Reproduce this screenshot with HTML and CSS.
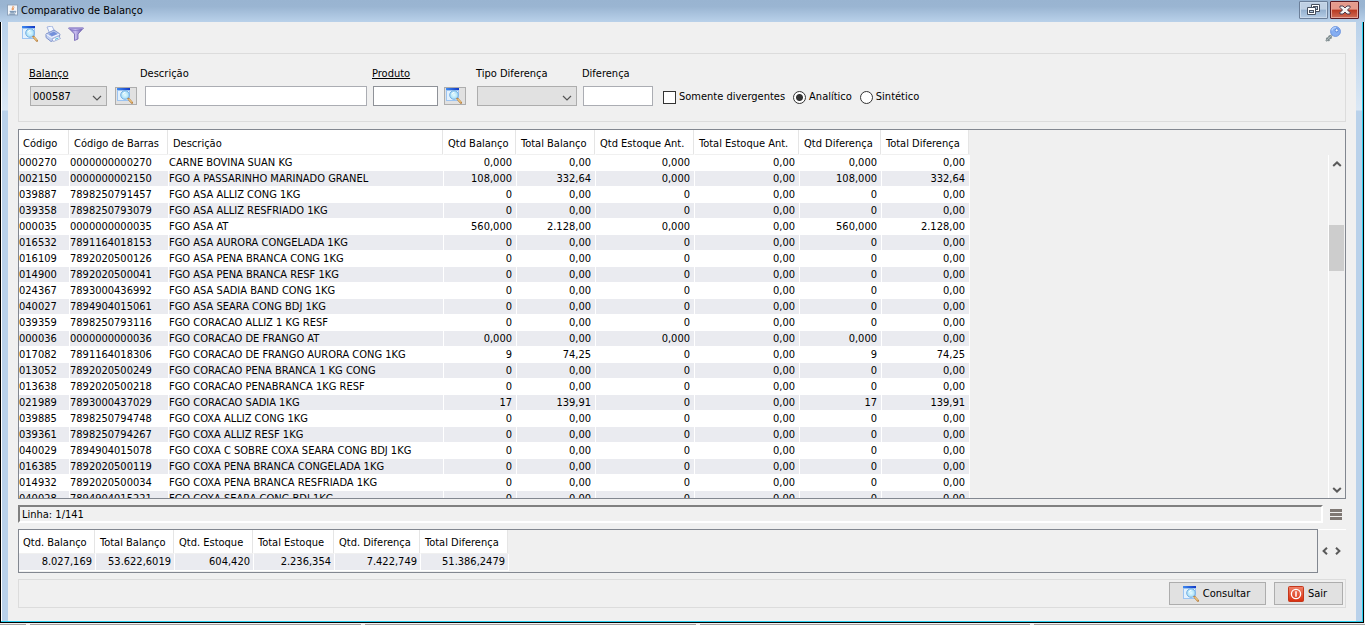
FILE: index.html
```html
<!DOCTYPE html>
<html lang="pt-BR">
<head>
    <meta charset="UTF-8">
    <meta name="viewport" content="width=device-width, initial-scale=1.0">
    <title>Comparativo de Balanço</title>
    <link rel="stylesheet" href="styles.css">
</head>
<body>
    <!-- shared icons -->
    <svg class="sprite" aria-hidden="true">
        <defs>
            <linearGradient id="bar" x1="0" x2="1"><stop offset="0" stop-color="#3f8af0"/><stop offset="1" stop-color="#1238c4"/></linearGradient>
            <linearGradient id="funnelFill" x1="0" x2="1"><stop offset="0" stop-color="#6f62b4"/><stop offset=".45" stop-color="#c9bdf0"/><stop offset="1" stop-color="#5d4fa3"/></linearGradient>
            <linearGradient id="powerFill" x1="0" y1="0" x2="0" y2="1"><stop offset="0" stop-color="#f0836a"/><stop offset="1" stop-color="#d92d0c"/></linearGradient>
            <radialGradient id="lens"><stop offset="0" stop-color="#e6fbff"/><stop offset="1" stop-color="#9fdcf7"/></radialGradient>
        </defs>
        <symbol id="search" viewBox="0 0 16 16">
            <rect x="0" y="0" width="13" height="13" fill="#9cc4f2"/>
            <rect x="1" y="3" width="11" height="9" fill="#e3f1fd"/>
            <rect x="0" y="0" width="13" height="2" fill="url(#bar)"/>
            <circle cx="8" cy="7" r="4.3" fill="url(#lens)" stroke="#78aee2"/>
            <path d="M5.8 6.4A2.6 2.6 0 0 1 8.4 4.4" fill="none" stroke="#fff"/>
            <path d="M11.4 10.8L15 14.8" stroke="#b98343" stroke-width="2.2" stroke-linecap="round"/>
            <path d="M11.6 10.8L14.8 14.4" stroke="#f2c981" stroke-width="1.2"/>
        </symbol>
        <symbol id="chevron-down" viewBox="0 0 10 6">
            <path d="M1 1L5 5L9 1" fill="none" stroke="#555" stroke-width="1.2"/>
        </symbol>
    </svg>

    <div class="window">
        <header class="titlebar">
            <svg class="java" viewBox="0 0 12 12">
                <rect x=".5" y=".5" width="11" height="11" fill="#f3f6fa" stroke="#8ba0b8"/>
                <path d="M6.5 1.5C7.5 3 4.8 3.8 5.8 6.2M8 3.2C6.6 4 6.6 5 7 6" fill="none" stroke="#e5792c"/>
                <path d="M3 7.5H8.5M3.5 9H8M2.5 10.5H9M8.5 7.5C10 7 10 8.6 8.4 9" fill="none" stroke="#51749c" stroke-width=".9"/>
            </svg>
            <h1>Comparativo de Balanço</h1>
            <button class="restore" type="button" aria-label="Restaurar">
                <svg width="13" height="12" viewBox="0 0 13 12">
                    <path d="M4.5 .5H12.5V7.5H4.5Z" fill="#fff" stroke="#46505f"/>
                    <rect x="6.5" y="2.5" width="4" height="3" fill="#b8cde2" stroke="#46505f"/>
                    <path d="M.5 3.5H8.5V10.5H.5Z" fill="#fff" stroke="#46505f"/>
                    <rect x="2.5" y="6.5" width="4" height="2" fill="#b8cde2" stroke="#46505f"/>
                </svg>
            </button>
            <button class="close" type="button" aria-label="Fechar">
                <svg width="12" height="10" viewBox="0 0 12 10">
                    <path d="M1 1H4L6 3L8 1H11V2.5L8.5 5L11 7.5V9H8L6 7L4 9H1V7.5L3.5 5L1 2.5Z" fill="#f5f5f5" stroke="#4d3c4c"/>
                </svg>
            </button>
        </header>

        <div class="frame">
            <main class="content">
                <nav class="toolbar">
                    <button type="button" aria-label="Consultar"><svg><use href="#search"/></svg></button>
                    <button type="button" aria-label="Imprimir">
                        <svg viewBox="0 0 16 16">
                            <path d="M2 1L7 0L10 6L5 8Z" fill="#f4f8ff" stroke="#a3b4e0"/>
                            <path d="M1 8L9 4L15 8L14 12L6 15.5L1 11.5Z" fill="#c0cef0" stroke="#7f93cb"/>
                            <path d="M1.5 8.5L6.5 11.5L14.5 8" fill="none" stroke="#f6f9ff"/>
                            <path d="M3.5 8L9 5.5L12.5 8L7 10.2Z" fill="#7390da"/>
                            <path d="M7 13L13.5 10L15.5 12.5L8.5 15.5Z" fill="#fff" stroke="#8297cd" stroke-width=".7"/>
                            <path d="M10 13.4L13.5 11.9" stroke="#43b4dc"/>
                        </svg>
                    </button>
                    <button type="button" aria-label="Filtrar">
                        <svg viewBox="0 0 16 16">
                            <path d="M.5 2H15.5L10 8V13L6.5 14.5V8Z" fill="url(#funnelFill)" stroke="#6c5eae" stroke-width=".8"/>
                            <path d="M1 2.3H15" stroke="#9d91d3" stroke-width="1.6"/>
                            <path d="M3 4.5H12" stroke="#8a7cc8" stroke-width=".8"/>
                        </svg>
                    </button>
                    <button class="key" type="button" aria-label="Permissões">
                        <svg viewBox="0 0 16 16">
                            <path d="M7 9L1 15M1.5 11.8L4.5 14.8M3.7 9.7L6.5 12.5" fill="none" stroke="#7c8a8d" stroke-width="2"/>
                            <path d="M7 9L1.5 14.5" stroke="#b8c2c3" stroke-width=".8"/>
                            <circle cx="10.5" cy="5.5" r="4.9" fill="#85aef2" stroke="#6c94df"/>
                            <path d="M6.8 4.5A4 4 0 0 1 11 1.7" fill="none" stroke="#b9d3fb" stroke-width="1.2"/>
                            <circle cx="11.7" cy="4.3" r="1.6" fill="#edf4ff" stroke="#5a86d8"/>
                        </svg>
                    </button>
                </nav>

                <form class="filters">
                    <div class="field balanco">
                        <label class="link" for="balanco">Balanço</label>
                        <div class="control">
                            <span class="select">
                                <select id="balanco"><option>000587</option></select>
                                <svg><use href="#chevron-down"/></svg>
                            </span>
                            <button class="lookup" type="button" aria-label="Buscar balanço"><svg><use href="#search"/></svg></button>
                        </div>
                    </div>
                    <div class="field descricao">
                        <label for="descricao">Descrição</label>
                        <div class="control"><input id="descricao" type="text"></div>
                    </div>
                    <div class="field produto">
                        <label class="link" for="produto">Produto</label>
                        <div class="control">
                            <input id="produto" type="text">
                            <button class="lookup" type="button" aria-label="Buscar produto"><svg><use href="#search"/></svg></button>
                        </div>
                    </div>
                    <div class="field tipo">
                        <label for="tipo">Tipo Diferença</label>
                        <div class="control">
                            <span class="select">
                                <select id="tipo"><option></option></select>
                                <svg><use href="#chevron-down"/></svg>
                            </span>
                        </div>
                    </div>
                    <div class="field diferenca">
                        <label for="diferenca">Diferença</label>
                        <div class="control"><input id="diferenca" type="text"></div>
                    </div>
                    <div class="options">
                        <label><input type="checkbox"> Somente divergentes</label>
                        <label><input type="radio" name="modo" checked> Analítico</label>
                        <label><input type="radio" name="modo"> Sintético</label>
                    </div>
                </form>

                <section class="grid-box">
                    <div class="grid-view">
                        <table class="grid">
                            <colgroup>
                                <col class="w51"><col class="w99"><col class="w275"><col class="w73"><col class="w79"><col class="w99"><col class="w105"><col class="w82"><col class="w88">
                            </colgroup>
                            <thead>
                                <tr>
                                    <th>Código</th>
                                    <th>Código de Barras</th>
                                    <th>Descrição</th>
                                    <th>Qtd Balanço</th>
                                    <th>Total Balanço</th>
                                    <th>Qtd Estoque Ant.</th>
                                    <th>Total Estoque Ant.</th>
                                    <th>Qtd Diferença</th>
                                    <th>Total Diferença</th>
                                </tr>
                            </thead>
                            <tbody id="rows"></tbody>
                        </table>
                    </div>
                    <div class="scrollbar">
                        <svg viewBox="0 0 10 6"><path d="M1.2 5L5 1.4L8.8 5" fill="none" stroke="#5a5a5a" stroke-width="2"/></svg>
                        <div class="thumb"></div>
                        <svg viewBox="0 0 10 6"><path d="M1.2 1L5 4.6L8.8 1" fill="none" stroke="#5a5a5a" stroke-width="2"/></svg>
                    </div>
                </section>

                <div class="status">
                    <p>Linha: 1/141</p>
                    <button class="menu" type="button" aria-label="Menu"><i></i><i></i><i></i></button>
                </div>

                <section class="summary">
                    <div class="summary-view">
                        <table class="grid totals">
                            <colgroup>
                                <col class="w77"><col class="w79"><col class="w79"><col class="w81"><col class="w86"><col class="w88">
                            </colgroup>
                            <thead>
                                <tr>
                                    <th>Qtd. Balanço</th>
                                    <th>Total Balanço</th>
                                    <th>Qtd. Estoque</th>
                                    <th>Total Estoque</th>
                                    <th>Qtd. Diferença</th>
                                    <th>Total Diferença</th>
                                </tr>
                            </thead>
                            <tbody>
                                <tr>
                                    <td class="num">8.027,169</td>
                                    <td class="num">53.622,6019</td>
                                    <td class="num">604,420</td>
                                    <td class="num">2.236,354</td>
                                    <td class="num">7.422,749</td>
                                    <td class="num">51.386,2479</td>
                                </tr>
                            </tbody>
                        </table>
                    </div>
                    <div class="pager">
                        <button type="button" aria-label="Anterior"><svg viewBox="0 0 6 8"><path d="M5 .8L1.6 4L5 7.2" fill="none" stroke="#5a5a5a" stroke-width="2"/></svg></button>
                        <button type="button" aria-label="Próximo"><svg viewBox="0 0 6 8"><path d="M1 .8L4.4 4L1 7.2" fill="none" stroke="#5a5a5a" stroke-width="2"/></svg></button>
                    </div>
                </section>

                <footer class="actions">
                    <button class="consultar" type="button"><svg><use href="#search"/></svg>Consultar</button>
                    <button class="sair" type="button">
                        <svg viewBox="0 0 16 16">
                            <rect x=".5" y=".5" width="15" height="15" rx="1" fill="url(#powerFill)" stroke="#c4371b"/>
                            <circle cx="8" cy="8" r="4.6" fill="none" stroke="#fff" stroke-width="1.3"/>
                            <path d="M8 5.3V10.7" stroke="#fff" stroke-width="1.5"/>
                        </svg>Sair
                    </button>
                </footer>
            </main>
        </div>
        <div class="taskline"><span></span><span></span><span></span><span></span><span></span></div>
    </div>

    <script src="script.js"></script>
</body>
</html>
```
FILE: styles.css
```css
*{
    box-sizing: border-box;
}
body{
    margin: 0;
    background: #f0f0f0;
    color: #000;
    font-family: "DejaVu Sans Condensed", "DejaVu Sans", sans-serif;
    font-size: 11px;
    line-height: 14px;
}
button, input, select{
    font: inherit;
    color: inherit;
    margin: 0;
    border-radius: 0;
}
button{
    display: flex;
    align-items: center;
    justify-content: center;
    padding: 0;
    border: none;
    background: none;
}
svg{
    display: block;
    flex: none;
    width: 16px;
    height: 16px;
}
.sprite{
    position: absolute;
    width: 0;
    height: 0;
}
.window{
    display: flex;
    flex-direction: column;
    height: 100vh;
    overflow: hidden;
}

/* title bar */
.titlebar{
    display: flex;
    align-items: flex-start;
    flex: none;
    height: 22px;
    padding: 1px 6px 0 7px;
    background: linear-gradient(#99b4d1, #9ab5d2 30%, #b9d1ea);
}
.titlebar .java{
    width: 11px;
    height: 12px;
    margin-top: 3px;
}
.titlebar h1{
    flex: 1;
    margin: 3px 0 0 3px;
    font-size: 11px;
    font-weight: normal;
}
.titlebar button{
    width: 29px;
    height: 18px;
    border: 1px solid #6b7f99;
    border-radius: 1px;
    box-shadow: inset 0 0 0 1px #c9d9ea;
    background: linear-gradient(#bfd0e3 45%, #94b0ce 50%, #b5cde6);
}
.titlebar button svg{
    width: auto;
    height: auto;
}
.titlebar .close{
    margin-left: 2px;
    border-color: #5a1a22;
    box-shadow: inset 0 0 0 1px #e5a296;
    background: linear-gradient(#e49a8c 45%, #b93820 50%, #cf6d57);
}

/* window frame */
.frame{
    display: flex;
    flex: 1;
    min-height: 0;
    margin-right: 1px;
    padding: 0 6px;
    border: 1px solid #000;
    border-top: none;
    box-shadow: inset -1px -1px 0 #2ad0f0, inset 1px 0 0 #fff;
    background: linear-gradient(#b9d1ea, #dbe8f5 88px, #b9d1ea 89px);
}
.content{
    display: flex;
    flex-direction: column;
    flex: 1;
    min-width: 0;
    margin: 0 1px 1px;
    padding: 0 10px 13px;
    background: #f0f0f0;
}
.toolbar{
    display: flex;
    gap: 7px;
    flex: none;
    height: 31px;
    padding: 4px 5px 0 4px;
}
.toolbar button{
    width: 16px;
    height: 16px;
}
.toolbar .key{
    margin-left: auto;
}

/* filters */
.filters{
    display: flex;
    flex: none;
    height: 69px;
    padding: 13px 10px 0;
    border: 1px solid #dcdcdc;
}
.field{
    display: flex;
    flex-direction: column;
    gap: 5px;
}
.link{
    text-decoration: underline;
}
.control{
    display: flex;
    align-items: center;
    gap: 8px;
    height: 20px;
    padding-left: 1px;
}
.balanco{
    width: 111px;
}
.descricao{
    width: 232px;
}
.descricao .control{
    padding-left: 5px;
}
.produto{
    width: 104px;
}
.produto .control{
    gap: 6px;
}
.tipo{
    width: 106px;
}
.diferenca{
    width: 81px;
}
input[type="text"]{
    width: 70px;
    height: 20px;
    padding: 0 3px;
    border: 1px solid #abadb3;
    background: #fff;
}
#descricao{
    width: 222px;
}
#produto{
    width: 65px;
    border-color: #8f9298;
}
.select{
    position: relative;
}
.select select{
    display: block;
    appearance: none;
    width: 77px;
    height: 20px;
    padding: 1px 2px 0;
    border: 1px solid #adadad;
    background: #e1e1e1;
}
.tipo select{
    width: 100px;
}
.select svg{
    position: absolute;
    right: 5px;
    top: 9px;
    width: 10px;
    height: 6px;
    pointer-events: none;
}
.lookup{
    width: 22px;
    height: 18px;
    padding-right: 2px;
    border: 1px solid #adadad;
    background: #e1e1e1;
}
.options{
    display: flex;
    align-items: center;
    align-self: flex-start;
    gap: 8px;
    height: 14px;
    margin-top: 23px;
}
.options label{
    display: flex;
    align-items: center;
    gap: 3px;
    white-space: nowrap;
}
.options input{
    appearance: none;
    width: 13px;
    height: 13px;
    border: 1px solid #333;
    background: #fff;
}
.options input[type="radio"]{
    border-radius: 50%;
}
.options input[type="radio"]:checked{
    background: radial-gradient(circle, #333 3px, #fff 4px);
}

/* tables */
.grid-box{
    display: flex;
    flex: 1;
    min-height: 0;
    margin-top: 7px;
    border: 1px solid #828790;
}
.grid-view{
    flex: 1;
    min-width: 0;
    overflow: hidden;
}
.grid{
    table-layout: fixed;
    width: 951px;
    border-spacing: 0;
    background: #fff;
}
.totals{
    width: 490px;
}
.grid th{
    height: 25px;
    padding: 3px 0 0 4px;
    border-right: 1px solid #fff;
    border-bottom: 1px solid #f0f0f0;
    box-shadow: inset -1px 0 0 #e5e5e5;
    font-weight: normal;
    text-align: left;
    white-space: nowrap;
}
.grid th:last-child{
    border-right-color: #f0f0f0;
}
.grid td{
    height: 16px;
    padding: 0;
    border-right: 1px solid #fff;
    border-bottom: 1px solid #fff;
    white-space: nowrap;
    overflow: hidden;
}
.grid .num{
    padding-right: 4px;
    text-align: right;
}
.grid tbody tr:nth-child(even), .totals tbody tr{
    background: #eaebf0;
}
.grid.totals th{
    height: 24px;
}
.grid.totals td{
    height: 17px;
}
.grid.totals .num{
    padding-right: 3px;
}
.w51{ width: 51px; }
.w73{ width: 73px; }
.w77{ width: 77px; }
.w79{ width: 79px; }
.w81{ width: 81px; }
.w82{ width: 82px; }
.w86{ width: 86px; }
.w88{ width: 88px; }
.w99{ width: 99px; }
.w105{ width: 105px; }
.w275{ width: 275px; }

.scrollbar{
    display: flex;
    flex-direction: column;
    align-items: center;
    width: 17px;
    margin-top: 25px;
    padding: 6px 1px 5px 0;
    border-left: 1px solid #fff;
}
.scrollbar svg{
    width: 10px;
    height: 6px;
}
.thumb{
    width: 15px;
    height: 46px;
    margin: 58px 0 auto;
    background: #cdcdcd;
}

/* status line */
.status{
    display: flex;
    align-items: center;
    flex: none;
    gap: 7px;
    margin-top: 6px;
    padding-right: 4px;
}
.status p{
    flex: 1;
    height: 18px;
    margin: 0;
    padding: 1px 2px 0;
    border: 2px solid;
    border-color: #808080 #fff #fff #808080;
    line-height: 13px;
}
.menu{
    flex-direction: column;
    gap: 1px;
    width: 12px;
}
.menu i{
    width: 12px;
    height: 3px;
    background: #7f7874;
}

/* totals */
.summary{
    display: flex;
    flex: none;
    margin-top: 6px;
}
.summary-view{
    flex: 1;
    height: 44px;
    border: 1px solid #828790;
    overflow: hidden;
}
.pager{
    display: flex;
    align-items: center;
    justify-content: space-around;
    width: 28px;
    padding: 0 1px 2px 0;
    border-top: 1px solid #fff;
}
.pager svg{
    width: 6px;
    height: 8px;
}

/* bottom buttons */
.actions{
    display: flex;
    justify-content: flex-end;
    align-items: center;
    flex: none;
    gap: 8px;
    height: 29px;
    margin-top: 6px;
    padding-right: 2px;
    border: 1px solid #dcdcdc;
}
.actions button{
    gap: 4px;
    height: 23px;
    padding-right: 2px;
    border: 1px solid #adadad;
    background: #e1e1e1;
}
.consultar{
    width: 97px;
}
.sair{
    width: 69px;
}

.taskline{
    display: flex;
    flex: none;
    gap: 4px;
    height: 2px;
    background: #f0f0f0;
}
.taskline span{
    flex: 1;
    border-bottom: 1px solid #a0a0a0;
}
.taskline span:first-child{
    flex: 0 0 26px;
}
```
FILE: script.js
```js
// code, barcode, description, counted qty, counted total, stock qty, stock total
const items = [
    ["000270", "0000000000270", "CARNE BOVINA SUAN KG", "0,000", "0,00", "0,000", "0,00"],
    ["002150", "0000000002150", "FGO A PASSARINHO MARINADO GRANEL", "108,000", "332,64", "0,000", "0,00"],
    ["039887", "7898250791457", "FGO ASA ALLIZ CONG 1KG", "0", "0,00", "0", "0,00"],
    ["039358", "7898250793079", "FGO ASA ALLIZ RESFRIADO 1KG", "0", "0,00", "0", "0,00"],
    ["000035", "0000000000035", "FGO ASA AT", "560,000", "2.128,00", "0,000", "0,00"],
    ["016532", "7891164018153", "FGO ASA AURORA CONGELADA 1KG", "0", "0,00", "0", "0,00"],
    ["016109", "7892020500126", "FGO ASA PENA BRANCA CONG 1KG", "0", "0,00", "0", "0,00"],
    ["014900", "7892020500041", "FGO ASA PENA BRANCA RESF 1KG", "0", "0,00", "0", "0,00"],
    ["024367", "7893000436992", "FGO ASA SADIA BAND CONG 1KG", "0", "0,00", "0", "0,00"],
    ["040027", "7894904015061", "FGO ASA SEARA CONG BDJ 1KG", "0", "0,00", "0", "0,00"],
    ["039359", "7898250793116", "FGO CORACAO ALLIZ 1 KG RESF", "0", "0,00", "0", "0,00"],
    ["000036", "0000000000036", "FGO CORACAO DE FRANGO AT", "0,000", "0,00", "0,000", "0,00"],
    ["017082", "7891164018306", "FGO CORACAO DE FRANGO AURORA CONG 1KG", "9", "74,25", "0", "0,00"],
    ["013052", "7892020500249", "FGO CORACAO PENA BRANCA 1 KG CONG", "0", "0,00", "0", "0,00"],
    ["013638", "7892020500218", "FGO CORACAO PENABRANCA 1KG RESF", "0", "0,00", "0", "0,00"],
    ["021989", "7893000437029", "FGO CORACAO SADIA 1KG", "17", "139,91", "0", "0,00"],
    ["039885", "7898250794748", "FGO COXA ALLIZ CONG 1KG", "0", "0,00", "0", "0,00"],
    ["039361", "7898250794267", "FGO COXA ALLIZ RESF 1KG", "0", "0,00", "0", "0,00"],
    ["040029", "7894904015078", "FGO COXA C SOBRE COXA SEARA CONG BDJ 1KG", "0", "0,00", "0", "0,00"],
    ["016385", "7892020500119", "FGO COXA PENA BRANCA CONGELADA 1KG", "0", "0,00", "0", "0,00"],
    ["014932", "7892020500034", "FGO COXA PENA BRANCA RESFRIADA 1KG", "0", "0,00", "0", "0,00"],
    ["040028", "7894904015221", "FGO COXA SEARA CONG BDJ 1KG", "0", "0,00", "0", "0,00"]
];

const rows = document.querySelector("#rows");
items.forEach((item) => {
    const tr = document.createElement("tr");
    // stock is zero for every item, so the difference repeats the counted values
    [...item, item[3], item[4]].forEach((value, i) => {
        const td = document.createElement("td");
        td.textContent = value;
        if(i > 2) td.className = "num";
        tr.appendChild(td);
    });
    rows.appendChild(tr);
});
```
